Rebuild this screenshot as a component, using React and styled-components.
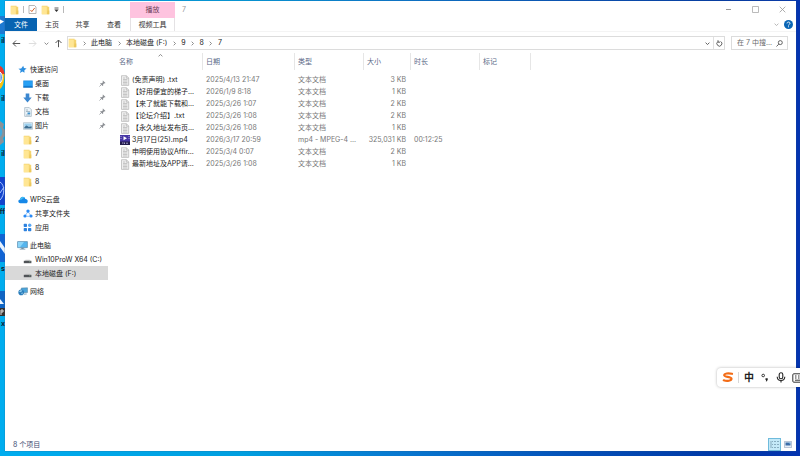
import React from "react";
import styled, { createGlobalStyle, css } from "styled-components";

const Global = createGlobalStyle`
  * { box-sizing: border-box; }
  body { margin: 0; overflow: hidden; }
  body, button, input {
    font-family: "Inter", "Noto Sans CJK SC", sans-serif;
    font-size: 7px;
    line-height: 12px;
    color: #222;
  }
  button { border: 0; padding: 0; background: none; }
  svg { display: block; flex: none; }
`;

const Desktop = styled.div`
  position: relative;
  display: flex;
  min-height: 100vh;
  padding: 1px 4px 5px 5px;
  background: linear-gradient(90deg, #00adef 0%, #009fe0 30%, #0878d0 50%, #0450b8 72%, #0038a6 90%, #0434b0 100%);
`;

const Shortcut = styled.div`
  position: absolute;
  left: 0;
  top: ${(p) => p.$top}px;
  width: 5px;
  overflow: hidden;
`;
const ShortcutName = styled.div`
  display: flex;
  justify-content: flex-end;
  margin-top: 2px;
  line-height: 10px;
  font-weight: 700;
  color: #123;
`;

const Window = styled.main`
  position: relative;
  flex: 1;
  min-width: 0;
  display: flex;
  flex-direction: column;
  background: #fff;
  box-shadow: 0 0 1px #345d80;
`;

const TitleBar = styled.header`
  display: flex;
  align-items: center;
  height: 17px;
  padding-left: 5px;
`;
const QuickTools = styled.div`
  display: flex;
  align-items: center;
  gap: 4px;
  width: 120px;
`;
const Divider = styled.span`
  width: 1px;
  height: 7px;
  background: #b8b8b8;
`;
const ContextTab = styled.div`
  align-self: stretch;
  width: 45px;
  margin-top: 1px;
  background: #fec3df;
  color: #6b4058;
  text-align: center;
  line-height: 16px;
`;
const Title = styled.span`
  flex: 1;
  padding-left: 7px;
  color: #999;
`;
const Caption = styled.button`
  width: 27px;
  height: 15px;
  display: grid;
  place-items: center;
`;

const Ribbon = styled.nav`
  display: flex;
  height: 13px;
`;
const Tab = styled.button`
  width: ${(p) => p.$w}px;
  line-height: 13px;
  color: #333;
  ${(p) => p.$primary && css`background: #0763b1; color: #fff;`}
  ${(p) => p.$context && css`border: solid #e4e2e4; border-width: 0 1px;`}
`;
const RibbonEnd = styled.div`
  margin-left: auto;
  display: flex;
  align-items: center;
  gap: 5px;
  padding-right: 3px;
`;

const NavBar = styled.div`
  display: flex;
  align-items: center;
  height: 22px;
  padding: 1px 8px 0 5px;
  border-top: 1px solid #f4f4f4;
`;
const NavButtons = styled.div`
  display: flex;
  width: 57px;
  align-items: center;
`;
const NavButton = styled.button`
  width: ${(p) => p.$w}px;
  height: 13px;
  display: grid;
  place-items: center;
`;
const Address = styled.div`
  flex: 1;
  display: flex;
  align-items: center;
  height: 14px;
  border: 1px solid #dcdcdc;
`;
const Crumb = styled.button`
  white-space: nowrap;
`;
const Separator = styled.span`
  width: 14px;
  display: grid;
  place-items: center;
`;
const AddressEnd = styled.div`
  display: flex;
  margin-left: auto;
  height: 100%;
`;
const AddressButton = styled.button`
  width: 11px;
  display: grid;
  place-items: center;
  border-left: ${(p) => (p.$line ? "1px solid #e0e0e0" : "0")};
`;
const Search = styled.label`
  display: flex;
  align-items: center;
  width: 57px;
  height: 14px;
  margin-left: 6px;
  padding: 0 4px 0 5px;
  border: 1px solid #dcdcdc;
`;
const SearchInput = styled.input`
  flex: 1;
  min-width: 0;
  height: 12px;
  border: 0;
  padding: 0;
  outline: 0;
  background: none;
  &::placeholder { color: #6b6b6b; opacity: 1; }
`;

const Body = styled.div`
  flex: 1;
  display: flex;
  min-height: 0;
`;
const Sidebar = styled.nav`
  flex: none;
  width: 103px;
  padding-top: 9px;
  display: flex;
  flex-direction: column;
  gap: 4px;
`;
const TreeRow = styled.a`
  display: flex;
  align-items: center;
  gap: 2px;
  height: 14px;
  padding: 1px 2px 0 ${(p) => (p.$child ? 17 : 12)}px;
  line-height: 13px;
  color: #222;
  text-decoration: none;
  white-space: nowrap;
  background: ${(p) => (p.$active ? "#d9d9d9" : "transparent")};
`;
const TreeIcon = styled.span`
  width: 11px;
  display: grid;
  place-items: center;
`;
const Pin = styled.span`
  margin-left: auto;
`;

const Files = styled.section`
  flex: 1;
  min-width: 0;
  padding-left: 5px;
`;
const Table = styled.table`
  table-layout: fixed;
  width: 418px;
  border-collapse: separate;
  border-spacing: 0;
`;
const Head = styled.th`
  width: ${(p) => p.$w}px;
  height: 17px;
  padding: 0 0 0 ${(p) => (p.$first ? 6 : 3)}px;
  border-right: 1px solid #e6e6e6;
  text-align: left;
  font-weight: 400;
  color: #5b6987;
  position: relative;
`;
const SortMark = styled.span`
  position: absolute;
  left: 50%;
  top: 0;
`;
const Cell = styled.td`
  height: 12px;
  padding: 0 5px 0 3px;
  white-space: nowrap;
  text-align: ${(p) => (p.$right ? "right" : "left")};
  color: #777;
`;
const SpacerCell = styled.td`
  height: 4px;
  padding: 0;
`;
const NameCell = styled.td`
  height: 12px;
  padding: 0 5px 0 7px;
`;
const FileName = styled.div`
  display: flex;
  align-items: center;
  gap: 2px;
  height: 12px;
  white-space: nowrap;
`;
const FileLabel = styled.span`
  min-width: 0;
  color: #222;
`;

const StatusBar = styled.footer`
  display: flex;
  align-items: center;
  justify-content: space-between;
  height: 13px;
  padding: 0 2px 0 8px;
  color: #3c4a70;
`;
const Views = styled.div`
  display: flex;
`;
const ViewButton = styled.button`
  width: 13px;
  height: 13px;
  display: grid;
  place-items: center;
  ${(p) => p.$on && css`background: #c4e9f8; border: 1px solid #6fbbdc;`}
`;

const InputBar = styled.div`
  position: absolute;
  right: -3px;
  bottom: 69px;
  display: flex;
  align-items: center;
  width: 86px;
  height: 19px;
  padding-left: 2px;
  border-radius: 4px 0 0 4px;
  background: #fff;
  box-shadow: 0 0 3px rgba(0, 0, 0, 0.3);
`;
const BarLine = styled.span`
  width: 1px;
  height: 11px;
  margin: 0 1px 0 2px;
  background: #d8d8d8;
`;
const InputMode = styled.button`
  width: ${(p) => p.$w || 17}px;
  height: 17px;
  display: grid;
  place-items: center;
  font-size: 10px;
  line-height: 17px;
  font-weight: 700;
`;
const Clip = styled.div`
  position: absolute;
  inset: 0;
  overflow: hidden;
  pointer-events: none;
`;

const Chevron = ({ d = "down", c = "#777", s = 5 }) => (
  <svg width={s} height={s} viewBox="0 0 6 6" fill="none" stroke={c} strokeWidth="1">
    <path d={{ down: "M.7 2 3 4.2 5.3 2", up: "M.7 4 3 1.8 5.3 4", right: "M2 .8 4.2 3 2 5.2" }[d]} />
  </svg>
);
const Arrow = ({ r = 0, c = "#555" }) => (
  <svg width="9" height="9" viewBox="0 0 9 9" fill="none" stroke={c} strokeWidth="1">
    <path transform={`rotate(${r} 4.5 4.5)`} d="M8.2 4.5H1M4 1.5l-3 3 3 3" />
  </svg>
);
const Folder = () => (
  <svg width="9" height="10" viewBox="0 0 9 10">
    <path d="M.8.7h5.8v1h1.6v7.6H.8z" fill="#f4d470" />
    <path d="M1.2 1.5h4.6v7.8H.8V1z" fill="#ffe694" />
    <path d="M6.6 5.5h1.7v3.8H6z" fill="#edc85c" />
  </svg>
);
const TextFile = () => (
  <svg width="10" height="11" viewBox="0 0 10 11">
    <path d="M1.5.7h5L8.7 3v7.4H1.5z" fill="#f0f0f0" stroke="#b3b3b3" strokeWidth=".7" />
    <path d="M6.3.8v2.4h2.3M3 3h2M3 4.5h4.3M3 6h4.3M3 7.5h4.3M3 9h4.3" fill="none" stroke="#aaa" strokeWidth=".6" />
  </svg>
);
const VideoFile = () => (
  <svg width="10" height="10" viewBox="0 0 10 10">
    <path d="M0 0h10v10H0z" fill="#4636a5" />
    <path d="M0 6.5h10V10H0z" fill="#231d4c" />
    <path d="M3.5 1.2 7 3.2 3.5 5.2z" fill="#fff" />
    <path d="M1 1v1M1 3v1M9 1v1M9 3v1M2 8h1.5M4.5 7.5v1.5M6 8.2h2" stroke="#c9c3f0" strokeWidth=".8" />
  </svg>
);
const PinIcon = () => (
  <svg width="7" height="7" viewBox="0 0 7 7">
    <path d="M3.9.5 6.5 3l-.8.4-.5-.2-1.1 1.2.1 1.2-.6.5L1.2 3.7l.5-.6 1.2.1L4 2l-.4-.7z" fill="#8c8f94" />
    <path d="M.5 6.5 2.4 4.6" stroke="#8c8f94" strokeWidth=".8" />
  </svg>
);
const icons = {
  star: (
    <svg width="9" height="9" viewBox="0 0 9 9">
      <path d="m5.2.7.8 2.4 2.6.5-2.2 1.6.1 2.6-2.1-1.4L1.9 8l.8-2.5L.4 3.7l2.8-.2z" fill="#2d8fe0" />
    </svg>
  ),
  desktop: (
    <svg width="10" height="8" viewBox="0 0 10 8">
      <path d="M.3.5h9.4v7H.3z" fill="#1687e0" />
      <path d="M1 1.2h8v4.6H1z" fill="#27a0f4" />
      <path d="M.3 6.6h9.4v.9H.3z" fill="#0b68b8" />
    </svg>
  ),
  download: (
    <svg width="9" height="10" viewBox="0 0 9 10">
      <path d="M2.7.5h3.6v4h2.4L4.5 9.5.3 4.500h2.4z" fill="#3b87d0" />
    </svg>
  ),
  document: (
    <svg width="8" height="10" viewBox="0 0 8 10">
      <path d="M.7.6h4.6L7.3 2.6v6.8H.7z" fill="#edf5fa" stroke="#8ea4b4" strokeWidth=".6" />
      <path d="M2 3h2M2 4.5h4M2 8h4" stroke="#7792a5" strokeWidth=".6" />
      <path d="M3.5 5.5h2.7v1.8H3.5z" fill="#3c91cd" />
    </svg>
  ),
  picture: (
    <svg width="10" height="8" viewBox="0 0 10 8">
      <path d="M.5.7h9v6.6h-9z" fill="#eef6fb" stroke="#9bb0be" strokeWidth=".6" />
      <path d="M1.3 1.5h7.4v3H1.3z" fill="#9dd0ee" />
      <path d="m1.3 5 2.2-1.6 2.3 1.3 2.9-.4v2.2H1.3z" fill="#3d6f93" />
    </svg>
  ),
  folder: <Folder />,
  cloud: (
    <svg width="10" height="8" viewBox="0 0 10 8">
      <path d="M2.3 7.3C-.4 7-.1 3.6 2 3.5 2.3.1 6.8-.2 7.3 3c3-.2 3.2 4 .5 4.3z" fill="#1688e8" />
      <path d="M2 3.5C2.3.8 5.5.1 6.8 2 4 2 3.8 4.5 2 3.5z" fill="#45c2f4" />
    </svg>
  ),
  share: (
    <svg width="10" height="9" viewBox="0 0 10 9">
      <path d="M4.7 3 2.5 6.2M5.3 3l2.2 3.2M3.5 7.3h3" stroke="#80baf8" strokeWidth=".9" />
      <circle cx="5" cy="2.1" r="1.7" fill="#2b8af4" />
      <circle cx="2" cy="7" r="1.6" fill="#2b8af4" />
      <circle cx="8" cy="7" r="1.6" fill="#2b8af4" />
    </svg>
  ),
  apps: (
    <svg width="9" height="9" viewBox="0 0 9 9">
      <g fill="#2e82df">
        <rect x=".7" y=".7" width="3.3" height="3.3" rx=".7" />
        <rect x=".7" y="5" width="3.3" height="3.3" rx=".7" />
        <rect x="5" y="5" width="3.3" height="3.3" rx=".7" />
      </g>
      <circle cx="6.7" cy="2.3" r="1.7" fill="#57a7f5" />
    </svg>
  ),
  pc: (
    <svg width="11" height="9" viewBox="0 0 11 9">
      <path d="M.6.6h9.8v6H.6z" fill="#55b5ee" stroke="#588bac" strokeWidth=".7" />
      <path d="M1 1h6L3 6.2H1z" fill="#8bd4f8" />
      <path d="M4.3 6.8h2.4v1h1.6v.7H2.7v-.7h1.6z" fill="#7190a6" />
    </svg>
  ),
  drive: (
    <svg width="9" height="9" viewBox="0 0 9 9">
      <path d="m1.6 5.7 1-.9h4l1 .9z" fill="#c5c5c5" />
      <path d="M.8 5.8h7.6v2.400H.8z" fill="#505357" />
      <path d="M6.2 6.8h1.2" stroke="#a5d3b0" strokeWidth=".6" />
    </svg>
  ),
  network: (
    <svg width="10" height="9" viewBox="0 0 10 9">
      <path d="M3.3 1 9.5.8v4.7l-6.2.4z" fill="#4ca5da" stroke="#527f9c" strokeWidth=".5" />
      <circle cx="3.2" cy="5.4" r="2.8" fill="#2a7dbb" />
      <path d="M1 4.7c1-1.5 2-1.7 3.5-1.4L3 5.2zM3 6l2-.5-.8 2z" fill="#91cceb" />
      <path d="M6 7.2 8.7 7" stroke="#5688a7" strokeWidth=".7" />
    </svg>
  ),
};

const shortcuts = [
  { top: 16, name: "il", art: <path d="M0 0h5v18H0z" fill="#1c79d2" />, mark: <path d="M0 3.5 4 5.5 0 8z" fill="#fff" />, h: 18 },
  { top: 66, name: "il", art: <><path d="M0 0c3 1 4.500 5 4.500 9H0z" fill="#e4382c" /><path d="M0 8h4.500c0 7-1.500 13-4.500 15z" fill="#fbc211" /></>, mark: <path d="M0 6c3 2 3 9 0 11z" fill="#3179e0" stroke="#fff" />, h: 26 },
  { top: 119, name: "il", art: <path d="M0 2 4 5l-1 4 2 2v6l-2 2 1 4-4 3z" fill="#8a9299" />, mark: <path d="M0 8c3 2 3 8 0 10z" fill="#42a9dc" />, h: 28 },
  { top: 177, name: "ff", art: <path d="M0 0h5v28H0z" fill="#1344cd" />, mark: <path d="M0 5c5 3 5 13 0 18M0 16l4-6" fill="none" stroke="#a7c4ff" />, h: 28 },
  { top: 234, name: "s", art: <path d="M0 0h5v28H0z" fill="#1164d4" />, mark: <path d="m0 7 5 7v6L0 13z" fill="#e7f2ff" />, h: 28 },
  { top: 291, name: "x", art: <><path d="M0 0h5v17H0z" fill="#1065c4" /><path d="M0 17h5v8H0z" fill="#35302d" /></>, mark: <><path d="m0 8 4 5H0z" fill="#eef7ff" /><path d="M1 24v-5h2v2H1" fill="none" stroke="#ddd" /></>, h: 26 },
];

const tree = [
  [
    { icon: "star", text: "快速访问" },
    { icon: "desktop", text: "桌面", child: true, pin: true },
    { icon: "download", text: "下载", child: true, pin: true },
    { icon: "document", text: "文档", child: true, pin: true },
    { icon: "picture", text: "图片", child: true, pin: true },
    { icon: "folder", text: "2", child: true },
    { icon: "folder", text: "7", child: true },
    { icon: "folder", text: "8", child: true },
    { icon: "folder", text: "8", child: true },
  ],
  [
    { icon: "cloud", text: "WPS云盘" },
    { icon: "share", text: "共享文件夹", child: true },
    { icon: "apps", text: "应用", child: true },
  ],
  [
    { icon: "pc", text: "此电脑" },
    { icon: "drive", text: "Win10ProW X64 (C:)", child: true },
    { icon: "drive", text: "本地磁盘 (F:)", child: true, active: true },
  ],
  [{ icon: "network", text: "网络" }],
];

const columns = [
  ["名称", 90], ["日期", 92], ["类型", 69], ["大小", 47], ["时长", 69], ["标记", 51],
];
const files = [
  ["(免责声明) .txt", "2025/4/13 21:47", "文本文档", "3 KB", ""],
  ["【好用便宜的梯子...", "2026/1/9 8:18", "文本文档", "1 KB", ""],
  ["【来了就能下载和...", "2025/3/26 1:07", "文本文档", "2 KB", ""],
  ["【论坛介绍】.txt", "2025/3/26 1:08", "文本文档", "2 KB", ""],
  ["【永久地址发布页...", "2025/3/26 1:08", "文本文档", "1 KB", ""],
  ["3月17日(25).mp4", "2026/3/17 20:59", "mp4 - MPEG-4 ...", "325,031 KB", "00:12:25"],
  ["申明使用协议Affir...", "2025/3/4 0:07", "文本文档", "2 KB", ""],
  ["最新地址及APP请...", "2025/3/26 1:08", "文本文档", "1 KB", ""],
];
const path = ["此电脑", "本地磁盘 (F:)", "9", "8", "7"];

export default function App() {
  return (
    <Desktop>
      <Global />
      <Clip>
        {shortcuts.map((s) => (
          <Shortcut key={s.top} $top={s.top}>
            <svg width="5" height={s.h} viewBox={`0 0 5 ${s.h}`}>{s.art}{s.mark}</svg>
            <ShortcutName>{s.name}</ShortcutName>
          </Shortcut>
        ))}
      </Clip>
      <Window>
        <TitleBar>
          <QuickTools>
            <Folder />
            <Divider />
            <svg width="9" height="9" viewBox="0 0 9 9">
              <path d="M1 .5h5.500L8 2v6.500H1z" fill="#fff" stroke="#999" strokeWidth=".7" />
              <path d="m2.500 5 1.300 1.600L6.700 3" fill="none" stroke="#d5662d" strokeWidth="1" />
            </svg>
            <Folder />
            <svg width="5" height="6" viewBox="0 0 5 6">
              <path d="M.5 1h4" stroke="#333" strokeWidth=".8" />
              <path d="M.3 2.500h4.400L2.500 5z" fill="#333" />
            </svg>
            <Divider />
          </QuickTools>
          <ContextTab>播放</ContextTab>
          <Title>7</Title>
          <Caption aria-label="最小化">
            <svg width="7" height="7" viewBox="0 0 7 7"><path d="M1 3.500h5" stroke="#999" /></svg>
          </Caption>
          <Caption aria-label="最大化">
            <svg width="7" height="7" viewBox="0 0 7 7"><path d="M.5.5h6v6h-6z" fill="none" stroke="#aaa" strokeWidth=".8" /></svg>
          </Caption>
          <Caption aria-label="关闭">
            <svg width="7" height="7" viewBox="0 0 7 7"><path d="m.7.7 5.600 5.600m0-5.600L.7 6.300" stroke="#999" strokeWidth=".8" /></svg>
          </Caption>
        </TitleBar>
        <Ribbon>
          <Tab $w={32} $primary>文件</Tab>
          <Tab $w={30}>主页</Tab>
          <Tab $w={31}>共享</Tab>
          <Tab $w={32}>查看</Tab>
          <Tab $w={45} $context>视频工具</Tab>
          <RibbonEnd>
            <Chevron c="#aaa" />
            <svg width="9" height="9" viewBox="0 0 9 9">
              <circle cx="4.500" cy="4.500" r="4.500" fill="#0965b5" />
              <path d="M3 3.400c.1-1.900 3.100-1.700 3 0C6 4.300 4.500 4.200 4.500 5.500M4.500 6.300v1" fill="none" stroke="#fff" strokeWidth=".9" />
            </svg>
          </RibbonEnd>
        </Ribbon>
        <NavBar>
          <NavButtons>
            <NavButton $w={12} aria-label="后退"><Arrow /></NavButton>
            <NavButton $w={20} aria-label="前进"><Arrow r={180} c="#ddd" /></NavButton>
            <NavButton $w={9} aria-label="最近的位置"><Chevron /></NavButton>
            <NavButton $w={15} aria-label="向上"><Arrow r={90} /></NavButton>
          </NavButtons>
          <Address>
            <Folder />
            {path.map((p) => (
              <React.Fragment key={p}>
                <Separator><Chevron d="right" /></Separator>
                <Crumb>{p}</Crumb>
              </React.Fragment>
            ))}
            <AddressEnd>
              <AddressButton aria-label="地址历史"><Chevron c="#444" /></AddressButton>
              <AddressButton $line aria-label="刷新">
                <svg width="7" height="7" viewBox="0 0 7 7" fill="none" stroke="#555" strokeWidth=".9">
                  <path d="M4.600 1.400A2.500 2.500 0 1 1 2 1.500M2 .2v2h2" />
                </svg>
              </AddressButton>
            </AddressEnd>
          </Address>
          <Search>
            <SearchInput aria-label="搜索" placeholder="在 7 中搜..." />
            <svg width="7" height="7" viewBox="0 0 7 7" fill="none" stroke="#555" strokeWidth=".9">
              <circle cx="4.300" cy="2.600" r="2" /><path d="M2.800 4.100.5 6.500" />
            </svg>
          </Search>
        </NavBar>
        <Body>
          <Sidebar>
            {tree.map((group) => (
              <div key={group[0].text}>
                {group.map((n, i) => (
                  <TreeRow key={i} href="#" $child={n.child} $active={n.active}>
                    <TreeIcon>{icons[n.icon]}</TreeIcon>
                    {n.text}
                    {n.pin && <Pin><PinIcon /></Pin>}
                  </TreeRow>
                ))}
              </div>
            ))}
          </Sidebar>
          <Files>
            <Table>
              <thead>
                <tr>
                  {columns.map(([name, w], i) => (
                    <Head key={name} $w={w} $first={i === 0}>
                      {name}
                      {i === 0 && <SortMark><Chevron d="up" /></SortMark>}
                    </Head>
                  ))}
                </tr>
              </thead>
              <tbody>
                <tr><SpacerCell colSpan={6} /></tr>
                {files.map(([name, date, type, size, length]) => (
                  <tr key={name}>
                    <NameCell>
                      <FileName>
                        {name.endsWith("mp4") ? <VideoFile /> : <TextFile />}
                        <FileLabel>{name}</FileLabel>
                      </FileName>
                    </NameCell>
                    <Cell>{date}</Cell>
                    <Cell>{type}</Cell>
                    <Cell $right>{size}</Cell>
                    <Cell>{length}</Cell>
                    <Cell />
                  </tr>
                ))}
              </tbody>
            </Table>
          </Files>
        </Body>
        <StatusBar>
          <span>8 个项目</span>
          <Views>
            <ViewButton $on aria-label="详细信息">
              <svg width="9" height="9" viewBox="0 0 9 9" stroke="#6f93a8" strokeWidth=".7">
                <path d="M1 1v7M2 1.500h1M2 4.500h1M2 7.500h1M4 1.500h2M4 4.500h2M4 7.500h2M7 1.500h2M7 4.500h2M7 7.500h2" />
              </svg>
            </ViewButton>
            <ViewButton aria-label="大图标">
              <svg width="8" height="7" viewBox="0 0 8 7">
                <path d="M.4.4h7.200v6.200H.4z" fill="#e6edf6" stroke="#9ba9c2" strokeWidth=".7" />
                <path d="M1.500 1.500h5v3h-5z" fill="#3c6ca8" /><path d="M4 1.500h2.500v1.500z" fill="#9acdf0" />
              </svg>
            </ViewButton>
          </Views>
        </StatusBar>
      </Window>
      <Clip>
        <InputBar>
          <InputMode aria-label="搜狗输入法">
            <svg width="12" height="11" viewBox="0 0 12 11" fill="none" stroke="#f36c16" strokeLinecap="round">
              <path d="M10 1.800C6 .9 2.300 1.400 2.200 3.300c0 2 7.300 1.200 7.300 3.500 0 2-4.500 2.700-7.700 1.500" strokeWidth="2.200" />
            </svg>
          </InputMode>
          <BarLine />
          <InputMode $w={18}>中</InputMode>
          <InputMode $w={13} aria-label="标点">
            <svg width="8" height="9" viewBox="0 0 8 9">
              <circle cx="2.200" cy="2.500" r="1.300" fill="none" stroke="#222" strokeWidth=".9" />
              <path d="M4.500 5.200h2.200v1.700L5.500 8.500l-.7-.3.400-1.200h-.7z" fill="#222" />
            </svg>
          </InputMode>
          <InputMode $w={19} aria-label="语音">
            <svg width="10" height="11" viewBox="0 0 10 11" fill="none" stroke="#222" strokeWidth="1.100">
              <rect x="3.200" y=".8" width="3.600" height="6" rx="1.800" />
              <path d="M1.200 4.800c.2 5 7.400 5 7.600 0M5 8.600v2" />
            </svg>
          </InputMode>
          <InputMode $w={13} aria-label="键盘">
            <svg width="10" height="10" viewBox="0 0 10 10" fill="none" stroke="#333">
              <rect x=".8" y=".8" width="12" height="8.400" rx="1" />
              <path d="M3 3h1.500M6 3h1.500M3 5h1.500M6 5h1.500M3 7.200h6" />
            </svg>
          </InputMode>
        </InputBar>
      </Clip>
    </Desktop>
  );
}
